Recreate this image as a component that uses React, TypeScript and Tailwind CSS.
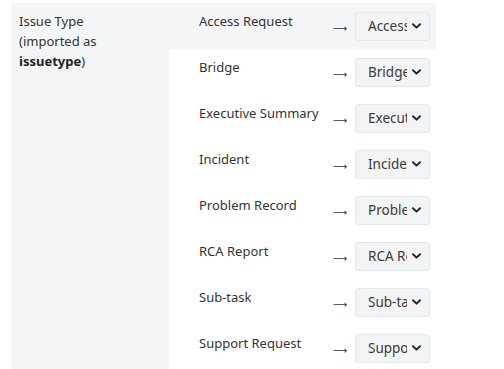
const rows = [
  { label: "Access Request", value: "Access Request" },
  { label: "Bridge", value: "Bridge" },
  { label: "Executive Summary", value: "Executive Summary" },
  { label: "Incident", value: "Incident" },
  { label: "Problem Record", value: "Problem Record" },
  { label: "RCA Report", value: "RCA Report" },
  { label: "Sub-task", value: "Sub-task" },
  { label: "Support Request", value: "Support Request" },
];

function Chevron() {
  return (
    <svg width="9" height="6" viewBox="0 0 9 6" className="shrink-0">
      <path d="M1 1.2 L4.5 4.6 L8 1.2" fill="none" stroke="#1f2937" strokeWidth="2" strokeLinecap="round" strokeLinejoin="round" />
    </svg>
  );
}

function FakeSelect({ value }: { value: string }) {
  return (
    <div className="flex h-[29px] w-[75px] items-center rounded-[3px] border border-[#e4e6ea] bg-[#f3f4f6] pl-[12px] pr-[8px]">
      <span className="w-[39px] overflow-hidden whitespace-nowrap text-[13.5px] leading-5 text-[#3a3a3a]">{value}</span>
      <span className="ml-auto">
        <Chevron />
      </span>
    </div>
  );
}

export default function App() {
  return (
    <div className="h-[369px] w-[504px] overflow-hidden bg-white pl-[11px] pt-[3px] text-[13px] leading-5 text-[#333]" style={{ fontFamily: '"Noto Sans", sans-serif' }}>
      <table className="w-[425px] table-fixed border-collapse">
        <tbody>
          {rows.map((r, i) => (
            <tr key={r.label} className={i === 0 ? "bg-[#f4f5f7]" : ""}>
              {i === 0 && (
                <th rowSpan={rows.length} className="w-[158px] bg-[#f4f5f7] px-2 pt-[8px] text-left align-top font-normal">
                  Issue Type
                  <br />
                  (imported as
                  <br />
                  <b className="font-bold text-[#222]">issuetype</b>)
                </th>
              )}
              <td className="h-[46px] w-[153px] pl-[30px] pt-[8px] align-top whitespace-nowrap">{r.label}</td>
              <td className="w-[32px] pt-[5px] pl-[4px] text-center align-middle text-[10px]" style={{ fontFamily: '"DejaVu Sans", sans-serif' }}>⟶</td>
              <td className="w-[82px] pl-[1px] pr-[6px] align-middle">
                <FakeSelect value={r.value} />
              </td>
            </tr>
          ))}
        </tbody>
      </table>
    </div>
  );
}
